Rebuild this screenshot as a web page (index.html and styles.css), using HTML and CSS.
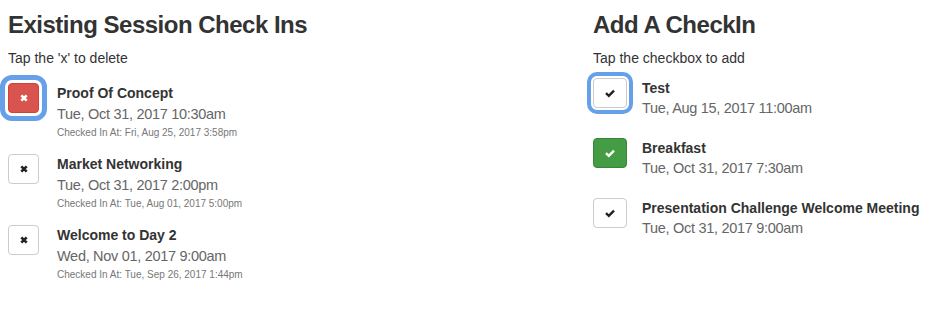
FILE: index.html
```html
<!DOCTYPE html>
<html>
<head>
<meta charset="utf-8">
<link rel="stylesheet" href="styles.css">
</head>
<body>
<div class="page">
  <section class="col col-left">
    <h3 class="heading">Existing Session Check Ins</h3>
    <p class="hint">Tap the 'x' to delete</p>
    <ul class="list list-existing">
      <li class="item">
        <button class="btn btn-danger focused"><svg class="ico" viewBox="0 0 10 10"><path d="M2.3 2.3 L7.7 7.7 M7.7 2.3 L2.3 7.7" /></svg></button>
        <div class="info">
          <div class="title">Proof Of Concept</div>
          <div class="date">Tue, Oct 31, 2017 10:30am</div>
          <div class="meta">Checked In At: Fri, Aug 25, 2017 3:58pm</div>
        </div>
      </li>
      <li class="item">
        <button class="btn btn-default"><svg class="ico" viewBox="0 0 10 10"><path d="M2.3 2.3 L7.7 7.7 M7.7 2.3 L2.3 7.7" /></svg></button>
        <div class="info">
          <div class="title">Market Networking</div>
          <div class="date">Tue, Oct 31, 2017 2:00pm</div>
          <div class="meta">Checked In At: Tue, Aug 01, 2017 5:00pm</div>
        </div>
      </li>
      <li class="item">
        <button class="btn btn-default"><svg class="ico" viewBox="0 0 10 10"><path d="M2.3 2.3 L7.7 7.7 M7.7 2.3 L2.3 7.7" /></svg></button>
        <div class="info">
          <div class="title">Welcome to Day 2</div>
          <div class="date">Wed, Nov 01, 2017 9:00am</div>
          <div class="meta">Checked In At: Tue, Sep 26, 2017 1:44pm</div>
        </div>
      </li>
    </ul>
  </section>
  <section class="col col-right">
    <h3 class="heading">Add A CheckIn</h3>
    <p class="hint">Tap the checkbox to add</p>
    <ul class="list list-add">
      <li class="item">
        <button class="btn btn-default btn-check focused focused-sm"><svg class="ico ico-ok" viewBox="0 0 12 10"><path d="M2 5.2 L4.8 7.8 L10 2.6" /></svg></button>
        <div class="info">
          <div class="title">Test</div>
          <div class="date">Tue, Aug 15, 2017 11:00am</div>
        </div>
      </li>
      <li class="item">
        <button class="btn btn-success btn-check"><svg class="ico ico-ok" viewBox="0 0 12 10"><path d="M2 5.2 L4.8 7.8 L10 2.6" /></svg></button>
        <div class="info">
          <div class="title">Breakfast</div>
          <div class="date">Tue, Oct 31, 2017 7:30am</div>
        </div>
      </li>
      <li class="item">
        <button class="btn btn-default btn-check"><svg class="ico ico-ok" viewBox="0 0 12 10"><path d="M2 5.2 L4.8 7.8 L10 2.6" /></svg></button>
        <div class="info">
          <div class="title">Presentation Challenge Welcome Meeting</div>
          <div class="date">Tue, Oct 31, 2017 9:00am</div>
        </div>
      </li>
    </ul>
  </section>
</div>
</body>
</html>
```

FILE: styles.css
```css
* { box-sizing: border-box; }
html, body { margin: 0; padding: 0; background: #fff; }
body {
  font-family: "Liberation Sans", Arial, sans-serif;
  font-size: 14px;
  line-height: 20px;
  color: #333;
}
.page {
  display: grid;
  grid-template-columns: 585px 1fr;
  padding: 12px 0 0 8px;
}
.heading {
  margin: 0;
  font-size: 24px;
  line-height: 26px;
  font-weight: 700;
  letter-spacing: -0.5px;
  color: #333;
}
.hint {
  margin: 10px 0 0;
  font-size: 14px;
  line-height: 20px;
  color: #333;
}
.list {
  list-style: none;
  margin: 0;
  padding: 0;
  display: flex;
  flex-direction: column;
}
.list-existing { margin-top: 15px; gap: 13px; }
.list-add { margin-top: 10px; gap: 20px; }
.item {
  display: flex;
  align-items: flex-start;
}
.list-existing .item { gap: 18px; }
.list-add .item { gap: 15px; }
.btn {
  flex: none;
  width: 31px;
  height: 30px;
  padding: 0;
  border: 1px solid #ccc;
  border-radius: 4px;
  background: #fff;
  display: flex;
  align-items: center;
  justify-content: center;
}
.btn-check { width: 34px; }
.btn-danger { background: #d9534f; border-color: #d43f3a; }
.btn-success { background: #449d44; border-color: #398439; }
.focused {
  outline: 5px solid #66a0e8;
  outline-offset: 3px;
}
.focused-sm {
  outline-width: 4px;
  outline-offset: 2px;
}
.ico {
  width: 10px;
  height: 10px;
  fill: none;
  stroke: #222;
  stroke-width: 2.6;
  stroke-linecap: butt;
}
.ico-ok {
  width: 12px;
  stroke-width: 2.4;
  stroke-linejoin: miter;
}
.btn-danger .ico, .btn-success .ico { stroke: #fff; }
.info { display: flex; flex-direction: column; }
.title { font-weight: 700; font-size: 14px; line-height: 20px; color: #333; }
.date {
  font-size: 14.5px;
  letter-spacing: -0.3px;
  line-height: 22px;
  color: #666;
}
.list-add .date { line-height: 20px; }
.meta { font-size: 10px; line-height: 16px; color: #777; }
```
